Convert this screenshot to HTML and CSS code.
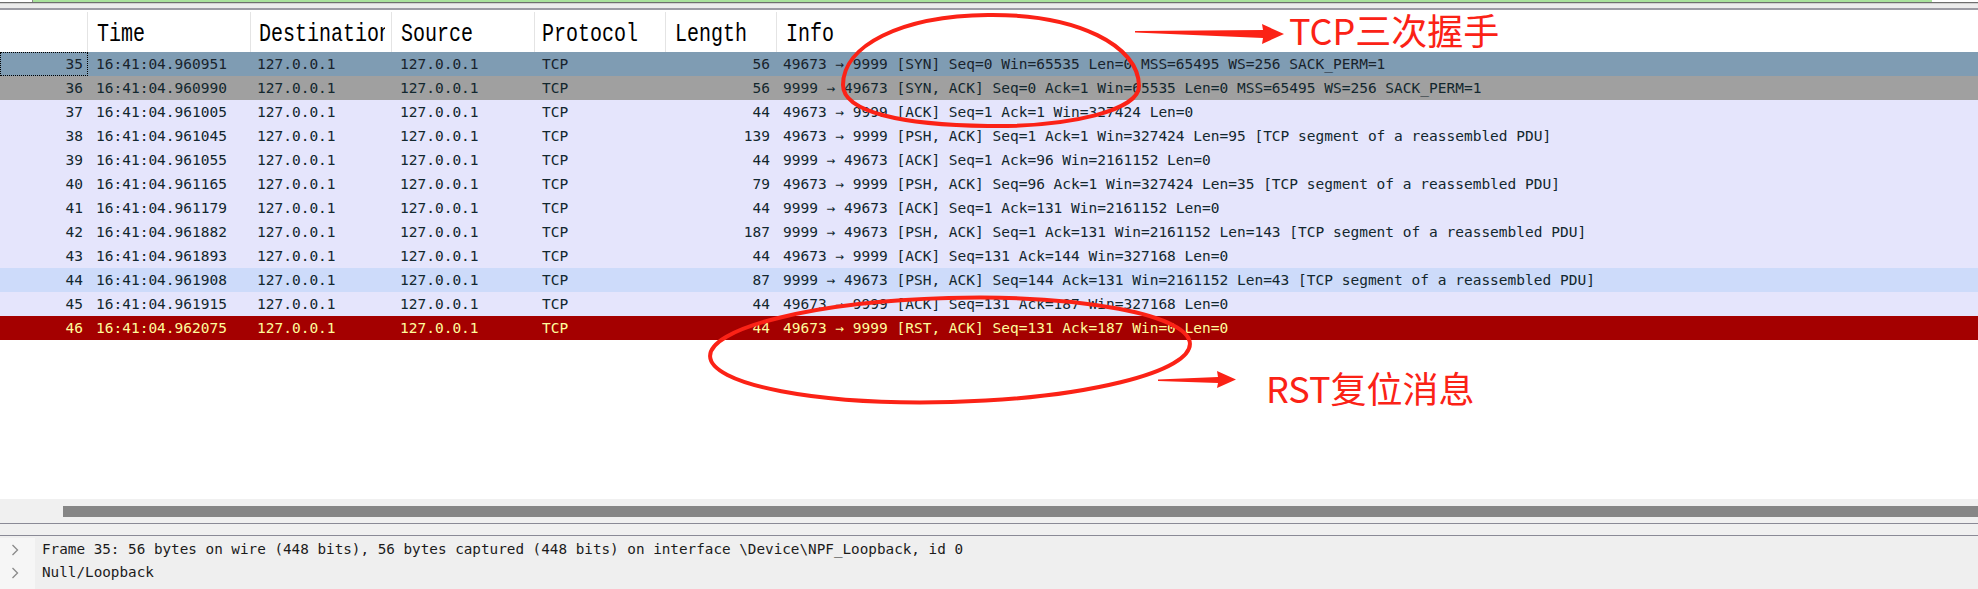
FILE: index.html
```html
<!DOCTYPE html>
<html>
<head>
<meta charset="utf-8">
<link rel="stylesheet" href="styles.css">
</head>
<body>
<div class="app">
  <div class="topbar">
    <div class="tb-left"></div>
    <div class="tb-green"></div>
    <div class="tb-rest"></div>
  </div>
  <div class="tb-lines"></div>

  <div class="plist">
    <div class="hdr">
      <div class="hc"></div>
      <div class="hc"><span class="ht">Time</span></div>
      <div class="hc"><span class="ht">Destination</span></div>
      <div class="hc"><span class="ht">Source</span></div>
      <div class="hc"><span class="ht">Protocol</span></div>
      <div class="hc"><span class="ht">Length</span></div>
      <div class="hc last"><span class="ht">Info</span></div>
    </div>

    <div class="row sel">
      <div class="c no focus">35</div><div class="c t">16:41:04.960951</div><div class="c d">127.0.0.1</div><div class="c s">127.0.0.1</div><div class="c p">TCP</div><div class="c l">56</div><div class="c i">49673 → 9999 [SYN] Seq=0 Win=65535 Len=0 MSS=65495 WS=256 SACK_PERM=1</div>
    </div>
    <div class="row gray">
      <div class="c no">36</div><div class="c t">16:41:04.960990</div><div class="c d">127.0.0.1</div><div class="c s">127.0.0.1</div><div class="c p">TCP</div><div class="c l">56</div><div class="c i">9999 → 49673 [SYN, ACK] Seq=0 Ack=1 Win=65535 Len=0 MSS=65495 WS=256 SACK_PERM=1</div>
    </div>
    <div class="row">
      <div class="c no">37</div><div class="c t">16:41:04.961005</div><div class="c d">127.0.0.1</div><div class="c s">127.0.0.1</div><div class="c p">TCP</div><div class="c l">44</div><div class="c i">49673 → 9999 [ACK] Seq=1 Ack=1 Win=327424 Len=0</div>
    </div>
    <div class="row">
      <div class="c no">38</div><div class="c t">16:41:04.961045</div><div class="c d">127.0.0.1</div><div class="c s">127.0.0.1</div><div class="c p">TCP</div><div class="c l">139</div><div class="c i">49673 → 9999 [PSH, ACK] Seq=1 Ack=1 Win=327424 Len=95 [TCP segment of a reassembled PDU]</div>
    </div>
    <div class="row">
      <div class="c no">39</div><div class="c t">16:41:04.961055</div><div class="c d">127.0.0.1</div><div class="c s">127.0.0.1</div><div class="c p">TCP</div><div class="c l">44</div><div class="c i">9999 → 49673 [ACK] Seq=1 Ack=96 Win=2161152 Len=0</div>
    </div>
    <div class="row">
      <div class="c no">40</div><div class="c t">16:41:04.961165</div><div class="c d">127.0.0.1</div><div class="c s">127.0.0.1</div><div class="c p">TCP</div><div class="c l">79</div><div class="c i">49673 → 9999 [PSH, ACK] Seq=96 Ack=1 Win=327424 Len=35 [TCP segment of a reassembled PDU]</div>
    </div>
    <div class="row">
      <div class="c no">41</div><div class="c t">16:41:04.961179</div><div class="c d">127.0.0.1</div><div class="c s">127.0.0.1</div><div class="c p">TCP</div><div class="c l">44</div><div class="c i">9999 → 49673 [ACK] Seq=1 Ack=131 Win=2161152 Len=0</div>
    </div>
    <div class="row">
      <div class="c no">42</div><div class="c t">16:41:04.961882</div><div class="c d">127.0.0.1</div><div class="c s">127.0.0.1</div><div class="c p">TCP</div><div class="c l">187</div><div class="c i">9999 → 49673 [PSH, ACK] Seq=1 Ack=131 Win=2161152 Len=143 [TCP segment of a reassembled PDU]</div>
    </div>
    <div class="row">
      <div class="c no">43</div><div class="c t">16:41:04.961893</div><div class="c d">127.0.0.1</div><div class="c s">127.0.0.1</div><div class="c p">TCP</div><div class="c l">44</div><div class="c i">49673 → 9999 [ACK] Seq=131 Ack=144 Win=327168 Len=0</div>
    </div>
    <div class="row blue">
      <div class="c no">44</div><div class="c t">16:41:04.961908</div><div class="c d">127.0.0.1</div><div class="c s">127.0.0.1</div><div class="c p">TCP</div><div class="c l">87</div><div class="c i">9999 → 49673 [PSH, ACK] Seq=144 Ack=131 Win=2161152 Len=43 [TCP segment of a reassembled PDU]</div>
    </div>
    <div class="row">
      <div class="c no">45</div><div class="c t">16:41:04.961915</div><div class="c d">127.0.0.1</div><div class="c s">127.0.0.1</div><div class="c p">TCP</div><div class="c l">44</div><div class="c i">49673 → 9999 [ACK] Seq=131 Ack=187 Win=327168 Len=0</div>
    </div>
    <div class="row rst">
      <div class="c no">46</div><div class="c t">16:41:04.962075</div><div class="c d">127.0.0.1</div><div class="c s">127.0.0.1</div><div class="c p">TCP</div><div class="c l">44</div><div class="c i">49673 → 9999 [RST, ACK] Seq=131 Ack=187 Win=0 Len=0</div>
    </div>
  </div>

  <div class="empty"></div>

  <div class="hscroll"><div class="thumb"></div></div>
  <div class="split"></div>

  <div class="details">
    <div class="drow">
      <div class="gut"><svg class="chev" width="8" height="12" viewBox="0 0 8 12"><path d="M1.5 1 L6.5 6 L1.5 11" fill="none" stroke="#8a8a8a" stroke-width="1.3"/></svg></div>
      <div class="dtext">Frame 35: 56 bytes on wire (448 bits), 56 bytes captured (448 bits) on interface \Device\NPF_Loopback, id 0</div>
    </div>
    <div class="drow">
      <div class="gut"><svg class="chev" width="8" height="12" viewBox="0 0 8 12"><path d="M1.5 1 L6.5 6 L1.5 11" fill="none" stroke="#8a8a8a" stroke-width="1.3"/></svg></div>
      <div class="dtext">Null/Loopback</div>
    </div>
    <div class="drow fill">
      <div class="gut"></div>
      <div class="dtext"></div>
    </div>
  </div>
</div>

<svg class="annot" width="1978" height="589" viewBox="0 0 1978 589">
  <path d="M 988 15 C 1078 14, 1139 46, 1139 86 C 1139 110, 1072 127, 988 126 C 902 125, 843 112, 843 85 C 843 46, 900 16, 988 15 Z" fill="none" stroke="#fb2216" stroke-width="4"/>
  <polygon points="1135,31 1263,30 1262,24 1284,34 1262,44 1263,38 1135,32.5" fill="#fb2216"/>
  <ellipse cx="950" cy="350" rx="240" ry="52" fill="none" stroke="#fb2216" stroke-width="4" transform="rotate(-1.5 950 350)"/>
  <polygon points="1158,379.5 1218,377 1217,371 1236,379.5 1217,388 1218,383 1158,381" fill="#fb2216"/>
</svg>
<div class="note note-tcp">TCP三次握手</div>
<div class="note note-rst">RST复位消息</div>
</body>
</html>
```

FILE: styles.css
```css
html, body {
  margin: 0;
  padding: 0;
  width: 1978px;
  height: 589px;
  overflow: hidden;
  background: #ffffff;
}

.app {
  display: flex;
  flex-direction: column;
  width: 1978px;
  height: 589px;
}

.topbar {
  display: flex;
  height: 2px;
  border-bottom: 1px solid #6e6e6e;
}
.tb-left {
  width: 32px;
  background: #ffffff;
  border-right: 1px solid #8a8a8a;
}
.tb-green {
  width: 1899px;
  background: #a9e29c;
}
.tb-rest {
  flex: 1;
  background: #ffffff;
}
.tb-lines {
  height: 4px;
  background: #ececec;
  border-top: 1px solid #d0d0d0;
  border-bottom: 2px solid #9c9ca4;
}

.plist {
  display: flex;
  flex-direction: column;
}

.hdr, .row {
  display: grid;
  grid-template-columns: 88px 163px 141px 143px 131px 111px 1fr;
}

.hdr {
  height: 42px;
  background: #ffffff;
}
.hc {
  font-family: "Liberation Mono", monospace;
  font-size: 20px;
  line-height: 40px;
  color: #000000;
  padding: 4px 6px 0 9px;
  margin-top: 2px;
  border-right: 1px solid #e4e4e4;
  white-space: nowrap;
  overflow: hidden;
  box-sizing: border-box;
}
.ht {
  display: block;
  overflow: hidden;
  transform: scaleY(1.3);
  transform-origin: 50% 64%;
}
.hc:nth-child(3) { padding-left: 8px; }
.hc:nth-child(5) { padding-left: 7px; }
.hc.last { border-right: none; }

.row {
  height: 24px;
  background: #e5e5fc;
  color: #12272e;
  font-family: "DejaVu Sans Mono", monospace;
  font-size: 14.5px;
  line-height: 24px;
}
.row.sel { background: #7f9cb3; color: #18232c; }
.row.gray { background: #a0a0a0; color: #12272e; }
.row.blue { background: #cddbfa; }
.row.rst { background: #a40000; color: #fffc9c; }

.c {
  white-space: nowrap;
  overflow: hidden;
  box-sizing: border-box;
}
.c.no { text-align: right; padding-right: 5px; }
.c.focus { outline: 1px dotted #000000; outline-offset: -1px; }
.c.t { padding-left: 8px; }
.c.d { padding-left: 6px; }
.c.s { padding-left: 8px; }
.c.p { padding-left: 7px; }
.c.l { text-align: right; padding-right: 7px; }
.c.i { padding-left: 6px; overflow: visible; }

.empty {
  height: 159px;
  background: #ffffff;
}

.hscroll {
  height: 25px;
  background: #f0f0f0;
  border-bottom: 1px solid #8a8a96;
  box-sizing: border-box;
  padding: 7px 0 0 63px;
}
.thumb {
  height: 11px;
  background: #868686;
}

.split {
  height: 11px;
  background: #f0f0f0;
  border-bottom: 1px solid #8a8a96;
}

.details {
  flex: 1;
  display: flex;
  flex-direction: column;
  background: #efefef;
  padding-top: 2px;
}
.drow {
  display: flex;
  height: 23px;
}
.drow.fill { flex: 1; }
.gut {
  width: 35px;
  background: #f6f6f6;
  display: flex;
  align-items: center;
  padding-left: 11px;
  box-sizing: border-box;
}
.dtext {
  flex: 1;
  padding-left: 7px;
  font-family: "DejaVu Sans Mono", monospace;
  font-size: 14.3px;
  line-height: 23px;
  color: #1b1b1b;
  white-space: nowrap;
}

.annot {
  position: absolute;
  left: 0;
  top: 0;
  pointer-events: none;
}

.note {
  position: absolute;
  font-family: "Noto Sans CJK SC", sans-serif;
  font-size: 36px;
  line-height: 36px;
  color: #fb2216;
  white-space: nowrap;
}
.note-tcp { left: 1289px; top: 11px; }
.note-rst { left: 1266px; top: 369px; }
```
